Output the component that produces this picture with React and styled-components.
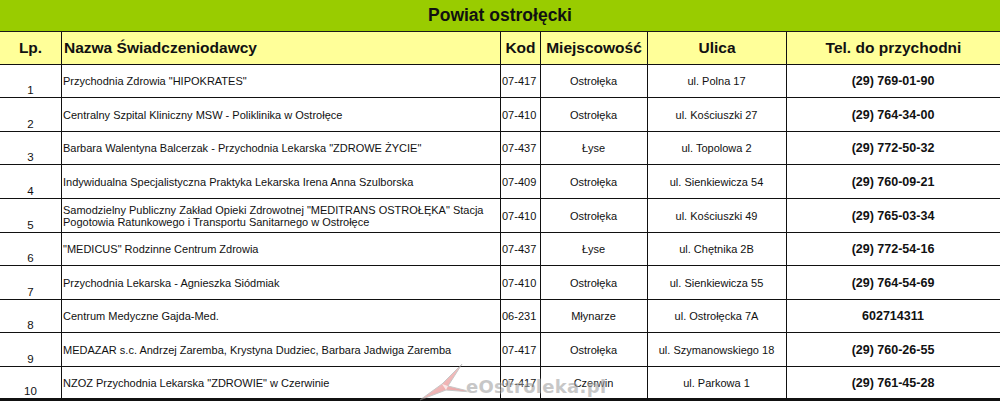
import React from "react";
import styled, { createGlobalStyle } from "styled-components";

const Global = createGlobalStyle`
  html, body { margin: 0; padding: 0; background: #ffffff; }
  body { font-family: "Liberation Sans", Arial, sans-serif; color: #000; }
`;

const Page = styled.div`
  position: relative;
  width: 1000px;
  height: 402px;
  overflow: hidden;
  background: #fff;
`;

const TitleBar = styled.div`
  height: 31px;
  background: #99cc00;
  border-bottom: 1px solid #1a1a1a;
  display: flex;
  align-items: center;
  justify-content: center;
  font-weight: bold;
  font-size: 17.5px;
  color: #111;
  box-sizing: content-box;
`;

const Grid = styled.div`
  display: grid;
  grid-template-columns: 62px 439px 40px 107px 139px 213px;
`;

const HeadCell = styled.div`
  height: 33px;
  box-sizing: border-box;
  background: #ffff99;
  border-bottom: 1px solid #111;
  border-right: ${(p) => (p.$last ? "none" : "1px solid #111")};
  display: flex;
  align-items: center;
  justify-content: ${(p) => (p.$align === "left" ? "flex-start" : "center")};
  padding: 0 2px;
  font-weight: bold;
  font-size: 15.5px;
  color: #111;
  white-space: nowrap;
`;

const Cell = styled.div`
  height: ${(p) => p.$h}px;
  box-sizing: border-box;
  border-bottom: ${(p) => (p.$lastRow ? "3px solid #111" : "1px solid #111")};
  border-right: ${(p) => (p.$last ? "none" : "1px solid #111")};
  display: flex;
  align-items: ${(p) => (p.$bottom ? "flex-end" : "center")};
  justify-content: ${(p) =>
    p.$align === "left" ? "flex-start" : "center"};
  padding: ${(p) => (p.$bottom ? "0 0 1px 0" : "0 2px 0 1px")};
  font-size: ${(p) => (p.$bold ? "12.5px" : p.$bottom ? "11.5px" : "11px")};
  font-weight: ${(p) => (p.$bold ? "bold" : "normal")};
  line-height: 12px;
  color: #111;
  overflow: hidden;
`;

const Watermark = styled.div`
  position: absolute;
  left: 418px;
  top: 362px;
  display: flex;
  align-items: center;
  opacity: 0.55;
  pointer-events: none;
`;

const WmText = styled.span`
  font-family: "DejaVu Sans", "Liberation Sans", sans-serif;
  font-weight: bold;
  font-size: 18px;
  color: #9a9a9a;
  letter-spacing: 0.3px;
  margin-left: -8px;
  margin-top: 8px;
  text-shadow: 0 0 2px #fff, 0 0 2px #fff;
`;

const rows = [
  ["1", 'Przychodnia Zdrowia "HIPOKRATES"', "07-417", "Ostrołęka", "ul. Polna 17", "(29) 769-01-90", 33],
  ["2", "Centralny Szpital Kliniczny MSW - Poliklinika w Ostrołęce", "07-410", "Ostrołęka", "ul. Kościuszki 27", "(29) 764-34-00", 34],
  ["3", 'Barbara Walentyna Balcerzak - Przychodnia Lekarska "ZDROWE ŻYCIE"', "07-437", "Łyse", "ul. Topolowa 2", "(29) 772-50-32", 33],
  ["4", "Indywidualna Specjalistyczna Praktyka Lekarska Irena Anna Szulborska", "07-409", "Ostrołęka", "ul. Sienkiewicza 54", "(29) 760-09-21", 34],
  ["5", 'Samodzielny Publiczny Zakład Opieki Zdrowotnej "MEDITRANS OSTROŁĘKA" Stacja Pogotowia Ratunkowego i Transportu Sanitarnego w Ostrołęce', "07-410", "Ostrołęka", "ul. Kościuszki 49", "(29) 765-03-34", 34],
  ["6", '"MEDICUS" Rodzinne Centrum Zdrowia', "07-437", "Łyse", "ul. Chętnika 2B", "(29) 772-54-16", 33],
  ["7", "Przychodnia Lekarska - Agnieszka Siódmiak", "07-410", "Ostrołęka", "ul. Sienkiewicza 55", "(29) 764-54-69", 34],
  ["8", "Centrum Medyczne Gajda-Med.", "06-231", "Młynarze", "ul. Ostrołęcka 7A", "602714311", 33],
  ["9", "MEDAZAR s.c. Andrzej Zaremba, Krystyna Dudziec, Barbara Jadwiga Zaremba", "07-417", "Ostrołęka", "ul. Szymanowskiego 18", "(29) 760-26-55", 34],
  ["10", 'NZOZ Przychodnia Lekarska "ZDROWIE" w Czerwinie', "07-417", "Czerwin", "ul. Parkowa 1", "(29) 761-45-28", 34],
];

function Star() {
  return (
    <svg width="56" height="40" viewBox="0 0 56 40">
      <defs>
        <linearGradient id="sg" x1="0" y1="0" x2="1" y2="1">
          <stop offset="0" stopColor="#f7c0c0" />
          <stop offset="1" stopColor="#d23a3a" />
        </linearGradient>
      </defs>
      <path
        d="M2 38 L24 22 L44 2 L30 24 L54 30 L28 28 Z"
        fill="url(#sg)"
        stroke="#9a9a9a"
        strokeWidth="1"
      />
      <path d="M24 22 L30 24 L28 28 Z" fill="#ffffff" opacity="0.7" />
    </svg>
  );
}

export default function App() {
  return (
    <>
      <Global />
      <Page>
        <TitleBar>Powiat ostrołęcki</TitleBar>
        <Grid>
          <HeadCell>Lp.</HeadCell>
          <HeadCell $align="left">Nazwa Świadczeniodawcy</HeadCell>
          <HeadCell>Kod</HeadCell>
          <HeadCell>Miejscowość</HeadCell>
          <HeadCell>Ulica</HeadCell>
          <HeadCell $last>Tel. do przychodni</HeadCell>
          {rows.map((r, i) => {
            const last = i === rows.length - 1;
            const h = r[6];
            return (
              <React.Fragment key={r[0]}>
                <Cell $h={h} $lastRow={last} $bottom>{r[0]}</Cell>
                <Cell $h={h} $lastRow={last} $align="left">{r[1]}</Cell>
                <Cell $h={h} $lastRow={last} $align="left">{r[2]}</Cell>
                <Cell $h={h} $lastRow={last}>{r[3]}</Cell>
                <Cell $h={h} $lastRow={last}>{r[4]}</Cell>
                <Cell $h={h} $lastRow={last} $last $bold>{r[5]}</Cell>
              </React.Fragment>
            );
          })}
        </Grid>
        <Watermark>
          <Star />
          <WmText>eOstroleka.pl</WmText>
        </Watermark>
      </Page>
    </>
  );
}
